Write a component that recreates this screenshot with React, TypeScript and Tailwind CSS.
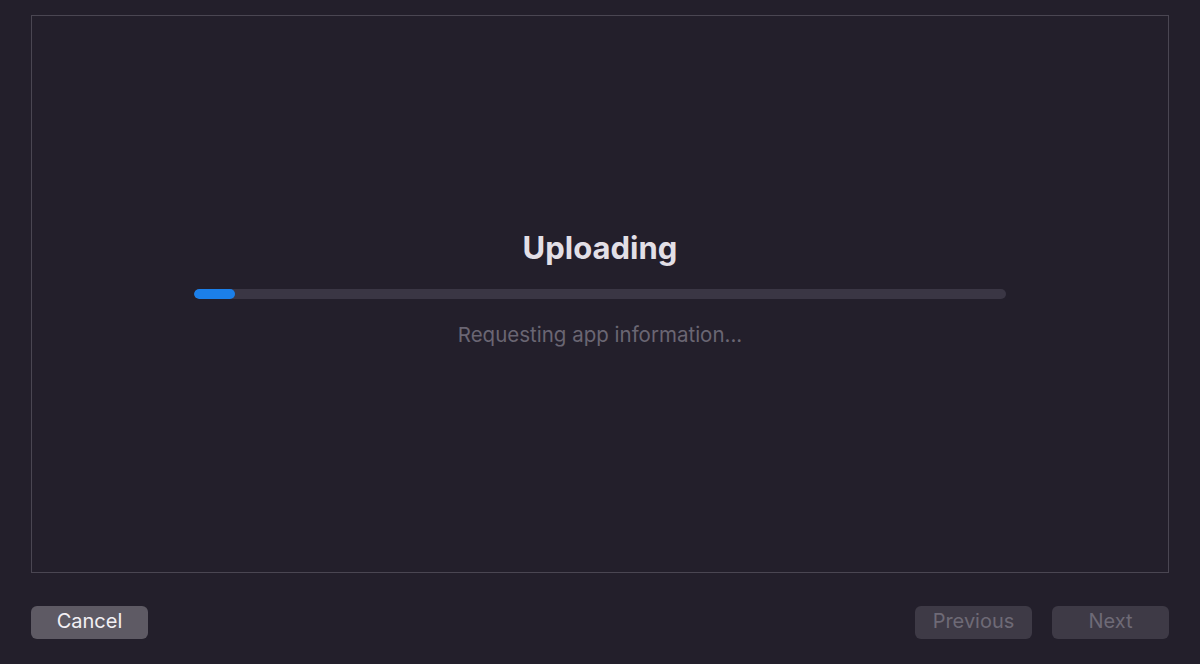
export default function App() {
    const progress = 5;

    return (
        <div className="h-[664px] w-[1200px] overflow-hidden bg-[#231f2b] px-[31px] pt-[15px] font-['Inter',sans-serif] flex flex-col">
            {/* Upload panel */}
            <div className="h-[558px] border border-[#4a4652] flex flex-col items-center justify-center pb-[12px]">
                <h1 className="text-[31px] font-bold leading-[36px] text-[#e2dfe6]">Uploading</h1>
                <div className="mt-[23px] h-[10px] w-[812px] rounded-full bg-[#3a3644] overflow-hidden">
                    <div className="h-full rounded-full bg-[#1b7fe9]" style={{ width: `${progress}%` }} />
                </div>
                <p className="mt-[24px] text-[20.5px] leading-[24px] text-[#6a6673]">Requesting app information...</p>
            </div>

            {/* Footer buttons */}
            <div className="mt-[33px] flex items-center justify-between">
                <button className="h-[33px] w-[117px] rounded-[6px] bg-[#5e5a64] pb-[3px] text-[20px] text-[#f2f0f4]">Cancel</button>
                <div className="flex gap-[20px]">
                    <button className="h-[33px] w-[117px] rounded-[6px] bg-[#3e3a46] pb-[3px] text-[20px] text-[#6e6a76]">Previous</button>
                    <button className="h-[33px] w-[117px] rounded-[6px] bg-[#3e3a46] pb-[3px] text-[20px] text-[#6e6a76]">Next</button>
                </div>
            </div>
        </div>
    );
}
